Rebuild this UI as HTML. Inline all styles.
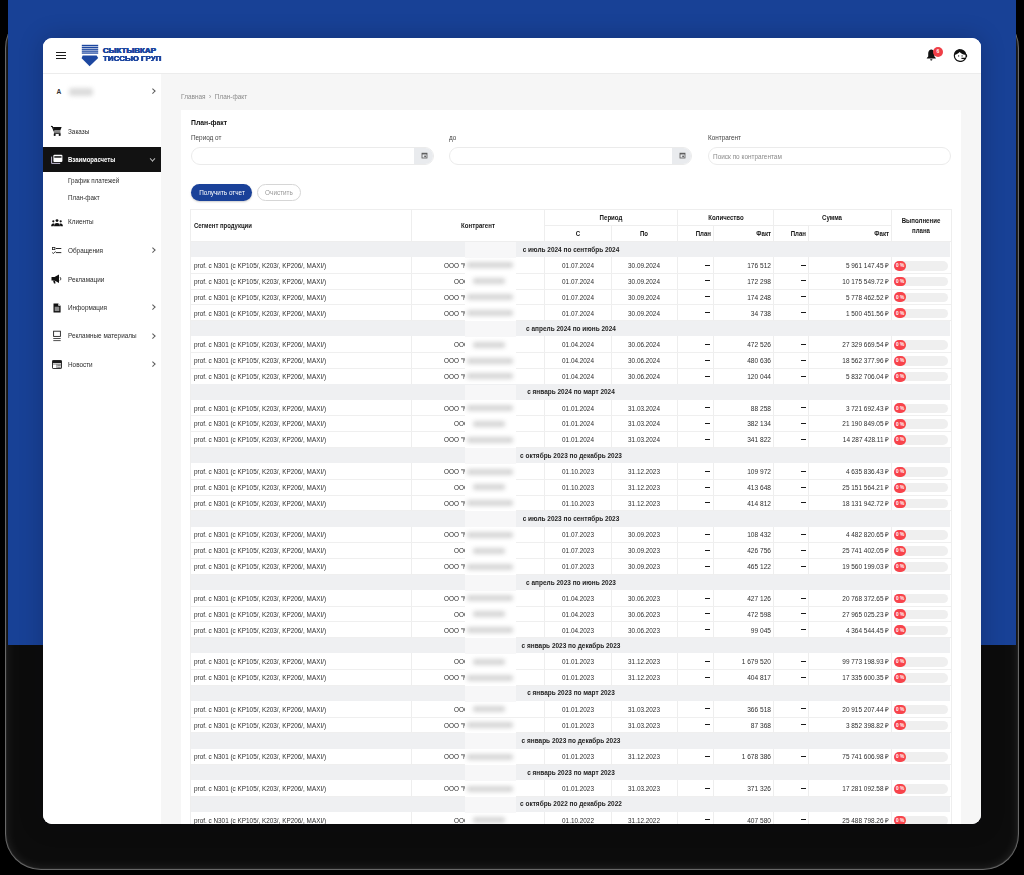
<!DOCTYPE html>
<html><head><meta charset="utf-8"><style>
*{margin:0;padding:0;box-sizing:border-box}
html,body{width:1024px;height:875px;overflow:hidden;background:#000;font-family:"Liberation Sans",sans-serif;color:#333}
.a{position:absolute}
#blue{left:8px;top:0;width:1008px;height:645px;background:#184196}
#shd{left:5px;top:12px;width:1014px;height:858px;border-radius:36px;background:#0c0c0c;box-shadow:inset 0 0 1px 1px rgba(255,255,255,.38),inset 0 0 12px rgba(255,255,255,.13)}
#win{left:43px;top:38px;width:938px;height:786px;border-radius:9px;overflow:hidden;background:#fff;box-shadow:0 0 24px rgba(0,0,20,.22)}
#pg{left:-43px;top:-38px;width:1024px;height:875px}
.t{position:absolute;white-space:nowrap;line-height:1}
.chev{position:absolute;width:3.6px;height:3.6px;border-right:0.9px solid #555;border-top:0.9px solid #555}
.inp{position:absolute;height:17.6px;border:1px solid #ebebeb;border-radius:9px;background:#fff;overflow:hidden}
.cal{position:absolute;right:0;top:0;width:19px;height:100%;background:#e9ebee}
</style></head><body>
<div class="a" id="shd"></div>
<div class="a" id="blue"></div>
<div class="a" id="win"><div class="a" id="pg">
<div class="a" style="left:43.00px;top:38.00px;width:938.00px;height:35.00px;background:#fff;"></div>
<div class="a" style="left:43.00px;top:73.00px;width:938.00px;height:1.00px;background:#ececec;"></div>
<div class="a" style="left:43.00px;top:74.00px;width:118.00px;height:756.00px;background:#fff;"></div>
<div class="a" style="left:161.00px;top:74.00px;width:820.00px;height:756.00px;background:#f6f6f6;"></div>
<div class="a" style="left:55.80px;top:51.50px;width:10.00px;height:1.50px;background:#1a1a1a;"></div>
<div class="a" style="left:55.80px;top:54.50px;width:10.00px;height:1.50px;background:#1a1a1a;"></div>
<div class="a" style="left:55.80px;top:57.50px;width:10.00px;height:1.50px;background:#1a1a1a;"></div>
<svg class="a" style="left:81px;top:44px" width="18" height="23" viewBox="0 0 18 23">
<g fill="#1d47a0">
<rect x="0.8" y="0.8" width="16.4" height="1.3"/><rect x="0.8" y="2.7" width="16.4" height="1.3"/>
<rect x="0.8" y="4.6" width="16.4" height="1.3"/><rect x="0.8" y="6.5" width="16.4" height="1.3"/>
<rect x="0.8" y="8.4" width="16.4" height="1.3"/>
<path d="M1.6 11.4 H15.6 L17.2 14 L8.6 22.2 L0.6 14.2 Z"/>
</g></svg>
<div class="t" style="left:102.80px;top:47.36px;transform-origin:0 50%;font-size:8.0px;font-weight:bold;color:#1d46a0;transform:scaleX(1.0);text-shadow:0.35px 0 0 #1d46a0,-0.3px 0 0 #1d46a0,0 0.3px 0 #1d46a0;">СЫКТЫВКАР</div>
<div class="t" style="left:102.80px;top:54.56px;transform-origin:0 50%;font-size:8.0px;font-weight:bold;color:#1d46a0;transform:scaleX(0.99);text-shadow:0.35px 0 0 #1d46a0,-0.3px 0 0 #1d46a0,0 0.3px 0 #1d46a0;">ТИССЬЮ ГРУП</div>
<svg class="a" style="left:926px;top:48.4px" width="12" height="13" viewBox="0 0 12 13">
<path d="M5 1.5 C3 2 2.2 3.8 2.2 5.8 V8.5 L0.8 10 V10.6 H9.8 V10 L8.4 8.5 V5.8 C8.4 3.8 7.6 2 5.6 1.5 Z" fill="#111"/>
<path d="M4.2 11.2 H6.4 C6.4 12 5.9 12.5 5.3 12.5 C4.7 12.5 4.2 12 4.2 11.2Z" fill="#111"/></svg>
<div class="a" style="left:932.8px;top:46.9px;width:10px;height:10px;border-radius:5px;background:#ef3e46"></div>
<div class="t" style="left:787.80px;width:300px;text-align:center;top:49.29px;transform-origin:50% 50%;font-size:5.0px;font-weight:bold;color:#fff;transform:scaleX(1);">6</div>
<svg class="a" style="left:953px;top:48px" width="15" height="14" viewBox="0 0 15 14">
<path d="M7.35 1.5 A5.95 5.95 0 1 0 12.9 9.6" fill="none" stroke="#111" stroke-width="1.25"/>
<path d="M1.4 7 C1.6 3.7 4.2 1.2 7.35 1.2 C10.7 1.2 13.3 3.8 13.4 7 C11.2 6.9 8.4 6 6.6 4.1 C5.4 5.6 3.6 6.6 1.4 7Z" fill="#111"/>
<rect x="12.5" y="6.2" width="1.6" height="3.2" rx="0.7" fill="#111"/>
<path d="M8.4 10.3 H13" stroke="#111" stroke-width="1.15"/>
<rect x="5" y="7.3" width="1.2" height="1.3" fill="#444"/><rect x="8.5" y="7.3" width="1.2" height="1.3" fill="#444"/></svg>
<div class="t" style="left:56.40px;top:88.62px;transform-origin:0 50%;font-size:6.6px;font-weight:bold;color:#333;transform:scaleX(1);">A</div>
<div class="a" style="left:69px;top:87.5px;width:24px;height:8px;background:#dcdcdc;filter:blur(2px);border-radius:3px"></div>
<div class="chev" style="left:150.6px;top:88.9px;border-color:#5a5a5a;transform:rotate(45deg)"></div>
<svg class="a" style="left:50px;top:125px" width="13" height="12" viewBox="0 0 13 12">
<path d="M1 1.3 L2.4 1.8 L4.2 6.4" fill="none" stroke="#111" stroke-width="1.2"/>
<path d="M2.9 1.9 H11.6 L10.3 5.6 H4.1 Z" fill="#111"/>
<rect x="3.9" y="5.6" width="6.5" height="2.5" fill="#8a8a8a"/>
<path d="M3.9 8.4 H10.6" stroke="#111" stroke-width="0.9"/>
<circle cx="4.7" cy="9.9" r="1.05" fill="#111"/><circle cx="9.7" cy="9.9" r="1.05" fill="#111"/></svg>
<div class="t" style="left:68.20px;top:127.50px;transform-origin:0 50%;font-size:7.0px;color:#2a2a2a;transform:scaleX(0.91);">Заказы</div>
<div class="a" style="left:43.00px;top:146.80px;width:118.00px;height:25.40px;background:#121212;"></div>
<svg class="a" style="left:50px;top:153px" width="14" height="12" viewBox="0 0 14 12">
<path d="M1.6 3.6 V10.4 H10.2" fill="none" stroke="#d8d0ea" stroke-width="0.9"/>
<rect x="3.4" y="1.8" width="9" height="7.2" rx="1" fill="#fff"/>
<rect x="4.3" y="3.1" width="7.2" height="1.7" fill="#333"/></svg>
<div class="t" style="left:68.00px;top:155.70px;transform-origin:0 50%;font-size:7.0px;font-weight:bold;color:#fff;transform:scaleX(0.86);">Взаиморасчеты</div>
<div class="chev" style="left:150.8px;top:156.8px;border-color:#b8b8b8;transform:rotate(135deg)"></div>
<div class="t" style="left:68.20px;top:177.20px;transform-origin:0 50%;font-size:7.0px;color:#2e2e2e;transform:scaleX(0.9);">График платежей</div>
<div class="t" style="left:68.20px;top:194.30px;transform-origin:0 50%;font-size:7.0px;color:#2e2e2e;transform:scaleX(0.9);">План-факт</div>
<svg class="a" style="left:51px;top:219px" width="12" height="8" viewBox="0 0 12 8">
<circle cx="6" cy="1.6" r="1.45" fill="#111"/><circle cx="2.3" cy="2.3" r="1.1" fill="#111"/><circle cx="9.7" cy="2.3" r="1.1" fill="#111"/>
<path d="M3 7.3 C3 5.2 4.2 4 6 4 C7.8 4 9 5.2 9 7.3Z" fill="#111"/>
<path d="M0.1 7.3 C0.1 5.6 0.9 4.4 2.2 4.4 C2.8 4.4 3.2 4.6 3.4 4.8 L2.6 7.3Z" fill="#111"/>
<path d="M11.9 7.3 C11.9 5.6 11.1 4.4 9.8 4.4 C9.2 4.4 8.8 4.6 8.6 4.8 L9.4 7.3Z" fill="#111"/></svg>
<div class="t" style="left:68.20px;top:218.40px;transform-origin:0 50%;font-size:7.0px;color:#2a2a2a;transform:scaleX(0.91);">Клиенты</div>
<svg class="a" style="left:52px;top:247px" width="10" height="8" viewBox="0 0 10 8">
<rect x="0.5" y="0.4" width="2.4" height="2.2" fill="none" stroke="#222" stroke-width="0.8"/>
<path d="M3.8 1.5 H9.3 M3.8 5.6 H9.3" stroke="#111" stroke-width="0.9"/>
<path d="M0.2 5.3 L1.3 6.6 L3.5 4.4" fill="none" stroke="#111" stroke-width="0.8"/></svg>
<div class="t" style="left:68.20px;top:246.60px;transform-origin:0 50%;font-size:7.0px;color:#2a2a2a;transform:scaleX(0.91);">Обращения</div>
<div class="chev" style="left:150.6px;top:248.20000000000002px;border-color:#5a5a5a;transform:rotate(45deg)"></div>
<svg class="a" style="left:51px;top:274px" width="11" height="10" viewBox="0 0 11 10">
<path d="M0.5 3 H3.5 L8 0.5 V9 L3.5 6.5 H0.5 Z" fill="#111"/><path d="M2 6.5 L3 9.5 H4.5 L4 6.5Z" fill="#111"/>
<path d="M9 3.2 C10 4 10 5.6 9 6.4" stroke="#111" stroke-width="0.9" fill="none"/></svg>
<div class="t" style="left:68.20px;top:275.50px;transform-origin:0 50%;font-size:7.0px;color:#2a2a2a;transform:scaleX(0.91);">Рекламации</div>
<svg class="a" style="left:53px;top:303px" width="8" height="10" viewBox="0 0 8 10">
<path d="M0.5 0.5 H5.3 L7.6 2.8 V9.4 H0.5 Z" fill="#111"/>
<path d="M5.3 0.5 V2.8 H7.6Z" fill="#fff"/>
<rect x="1.7" y="3.7" width="4.6" height="4.4" fill="#8a8a8a"/></svg>
<div class="t" style="left:68.20px;top:303.70px;transform-origin:0 50%;font-size:7.0px;color:#2a2a2a;transform:scaleX(0.91);">Информация</div>
<div class="chev" style="left:150.6px;top:305.2px;border-color:#5a5a5a;transform:rotate(45deg)"></div>
<svg class="a" style="left:53px;top:330px" width="8" height="12" viewBox="0 0 8 12">
<rect x="0.6" y="1.2" width="6.8" height="5.2" fill="none" stroke="#222" stroke-width="0.9"/>
<path d="M0.3 8.5 H7.7 M0.3 10.6 H7.7" stroke="#222" stroke-width="0.8"/></svg>
<div class="t" style="left:68.20px;top:332.10px;transform-origin:0 50%;font-size:7.0px;color:#2a2a2a;transform:scaleX(0.91);">Рекламные материалы</div>
<div class="chev" style="left:150.6px;top:333.59999999999997px;border-color:#5a5a5a;transform:rotate(45deg)"></div>
<svg class="a" style="left:52px;top:360px" width="10" height="9" viewBox="0 0 10 9">
<rect x="0.5" y="0.5" width="9" height="8" rx="0.6" fill="none" stroke="#1a1a1a" stroke-width="0.9"/>
<rect x="0.5" y="0.5" width="9" height="2.6" fill="#1a1a1a"/>
<rect x="1.3" y="4.8" width="3" height="3" fill="#fff"/>
<path d="M5.4 5.2 H8.8 M5.4 7.2 H8.8" stroke="#333" stroke-width="0.8"/>
<path d="M1 4.2 H9 M4.8 4.2 V8.2" stroke="#333" stroke-width="0.5"/></svg>
<div class="t" style="left:68.20px;top:360.50px;transform-origin:0 50%;font-size:7.0px;color:#2a2a2a;transform:scaleX(0.91);">Новости</div>
<div class="chev" style="left:150.6px;top:362.0px;border-color:#5a5a5a;transform:rotate(45deg)"></div>
<div class="t" style="left:180.50px;top:93.00px;transform-origin:0 50%;font-size:7.0px;color:#8a8a8a;transform:scaleX(0.92);">Главная &nbsp;›&nbsp; План-факт</div>
<div class="a" style="left:180.50px;top:110.00px;width:780.50px;height:720.00px;background:#fff;"></div>
<div class="t" style="left:190.80px;top:118.69px;transform-origin:0 50%;font-size:7.2px;font-weight:bold;color:#111;transform:scaleX(0.95);">План-факт</div>
<div class="t" style="left:190.80px;top:134.00px;transform-origin:0 50%;font-size:7.0px;color:#444;transform:scaleX(0.91);">Период от</div>
<div class="t" style="left:448.60px;top:134.00px;transform-origin:0 50%;font-size:7.0px;color:#444;transform:scaleX(0.91);">до</div>
<div class="t" style="left:707.90px;top:134.00px;transform-origin:0 50%;font-size:7.0px;color:#444;transform:scaleX(0.91);">Контрагент</div>
<div class="inp" style="left:190.8px;top:147.4px;width:243.2px"><div class="cal"></div></div>
<div class="inp" style="left:448.6px;top:147.4px;width:243.4px"><div class="cal"></div></div>
<div class="inp" style="left:707.9px;top:147.4px;width:243.1px"></div>
<div class="t" style="left:713.30px;top:152.50px;transform-origin:0 50%;font-size:7.0px;color:#8a8a8a;transform:scaleX(0.92);">Поиск по контрагентам</div>
<svg class="a" style="left:421.2px;top:151.9px" width="7" height="7" viewBox="0 0 7 7"><rect x="1" y="1.2" width="5" height="4.8" fill="none" stroke="#555" stroke-width="0.8"/><rect x="1" y="1.2" width="5" height="1.2" fill="#555"/><rect x="3.3" y="3.6" width="1.6" height="1.5" fill="#555"/></svg>
<svg class="a" style="left:679.2px;top:151.9px" width="7" height="7" viewBox="0 0 7 7"><rect x="1" y="1.2" width="5" height="4.8" fill="none" stroke="#555" stroke-width="0.8"/><rect x="1" y="1.2" width="5" height="1.2" fill="#555"/><rect x="3.3" y="3.6" width="1.6" height="1.5" fill="#555"/></svg>
<div class="a" style="left:190.8px;top:184.1px;width:61.5px;height:17px;border-radius:8.5px;background:#1a4199;box-shadow:0 1px 2px rgba(0,0,0,.2)"></div>
<div class="t" style="left:71.60px;width:300px;text-align:center;top:188.80px;transform-origin:50% 50%;font-size:7.0px;color:#fff;transform:scaleX(0.91);">Получить отчет</div>
<div class="a" style="left:256.7px;top:184.1px;width:43.9px;height:17px;border-radius:8.5px;border:1px solid #d6d6d6;background:#fff"></div>
<div class="t" style="left:128.60px;width:300px;text-align:center;top:188.80px;transform-origin:50% 50%;font-size:7.0px;color:#999;transform:scaleX(0.91);">Очистить</div>
<div class="a" style="left:190.80px;top:208.90px;width:760.20px;height:621.10px;background:#fff;"></div>
<div class="a" style="left:190.30px;top:208.90px;width:1.00px;height:621.10px;background:#eeeeee;"></div>
<div class="a" style="left:950.50px;top:208.90px;width:1.00px;height:621.10px;background:#eeeeee;"></div>
<div class="a" style="left:190.80px;top:208.90px;width:760.20px;height:1.00px;background:#eeeeee;"></div>
<div class="a" style="left:544.80px;top:225.10px;width:346.70px;height:1.00px;background:#eeeeee;"></div>
<div class="a" style="left:190.80px;top:240.90px;width:760.20px;height:1.00px;background:#eeeeee;"></div>
<div class="a" style="left:410.90px;top:208.90px;width:1.00px;height:32.50px;background:#eeeeee;"></div>
<div class="a" style="left:544.30px;top:208.90px;width:1.00px;height:32.50px;background:#eeeeee;"></div>
<div class="a" style="left:610.50px;top:225.60px;width:1.00px;height:15.80px;background:#eeeeee;"></div>
<div class="a" style="left:677.10px;top:208.90px;width:1.00px;height:32.50px;background:#eeeeee;"></div>
<div class="a" style="left:712.50px;top:225.60px;width:1.00px;height:15.80px;background:#eeeeee;"></div>
<div class="a" style="left:772.90px;top:208.90px;width:1.00px;height:32.50px;background:#eeeeee;"></div>
<div class="a" style="left:808.30px;top:225.60px;width:1.00px;height:15.80px;background:#eeeeee;"></div>
<div class="a" style="left:891.00px;top:208.90px;width:1.00px;height:32.50px;background:#eeeeee;"></div>
<div class="a" style="left:410.90px;top:241.40px;width:1.00px;height:588.60px;background:#eeeeee;"></div>
<div class="a" style="left:544.30px;top:241.40px;width:1.00px;height:588.60px;background:#eeeeee;"></div>
<div class="a" style="left:610.50px;top:241.40px;width:1.00px;height:588.60px;background:#eeeeee;"></div>
<div class="a" style="left:677.10px;top:241.40px;width:1.00px;height:588.60px;background:#eeeeee;"></div>
<div class="a" style="left:712.50px;top:241.40px;width:1.00px;height:588.60px;background:#eeeeee;"></div>
<div class="a" style="left:772.90px;top:241.40px;width:1.00px;height:588.60px;background:#eeeeee;"></div>
<div class="a" style="left:808.30px;top:241.40px;width:1.00px;height:588.60px;background:#eeeeee;"></div>
<div class="a" style="left:891.00px;top:241.40px;width:1.00px;height:588.60px;background:#eeeeee;"></div>
<div class="t" style="left:193.80px;top:221.80px;transform-origin:0 50%;font-size:7.0px;font-weight:bold;color:#161616;transform:scaleX(0.85);">Сегмент продукции</div>
<div class="t" style="left:328.10px;width:300px;text-align:center;top:221.80px;transform-origin:50% 50%;font-size:7.0px;font-weight:bold;color:#161616;transform:scaleX(0.87);">Контрагент</div>
<div class="t" style="left:461.20px;width:300px;text-align:center;top:213.70px;transform-origin:50% 50%;font-size:7.0px;font-weight:bold;color:#161616;transform:scaleX(0.87);">Период</div>
<div class="t" style="left:427.90px;width:300px;text-align:center;top:229.60px;transform-origin:50% 50%;font-size:7.0px;font-weight:bold;color:#161616;transform:scaleX(0.87);">С</div>
<div class="t" style="left:494.30px;width:300px;text-align:center;top:229.60px;transform-origin:50% 50%;font-size:7.0px;font-weight:bold;color:#161616;transform:scaleX(0.87);">По</div>
<div class="t" style="left:575.50px;width:300px;text-align:center;top:213.70px;transform-origin:50% 50%;font-size:7.0px;font-weight:bold;color:#161616;transform:scaleX(0.87);">Количество</div>
<div class="t" style="left:410.50px;width:300px;text-align:right;top:229.60px;transform-origin:100% 50%;font-size:7.0px;font-weight:bold;color:#161616;transform:scaleX(0.87);">План</div>
<div class="t" style="left:471.00px;width:300px;text-align:right;top:229.60px;transform-origin:100% 50%;font-size:7.0px;font-weight:bold;color:#161616;transform:scaleX(0.87);">Факт</div>
<div class="t" style="left:682.45px;width:300px;text-align:center;top:213.70px;transform-origin:50% 50%;font-size:7.0px;font-weight:bold;color:#161616;transform:scaleX(0.87);">Сумма</div>
<div class="t" style="left:506.30px;width:300px;text-align:right;top:229.60px;transform-origin:100% 50%;font-size:7.0px;font-weight:bold;color:#161616;transform:scaleX(0.87);">План</div>
<div class="t" style="left:589.10px;width:300px;text-align:right;top:229.60px;transform-origin:100% 50%;font-size:7.0px;font-weight:bold;color:#161616;transform:scaleX(0.87);">Факт</div>
<div class="t" style="left:771.25px;width:300px;text-align:center;top:216.60px;transform-origin:50% 50%;font-size:7.0px;font-weight:bold;color:#161616;transform:scaleX(0.87);">Выполнение</div>
<div class="t" style="left:771.25px;width:300px;text-align:center;top:226.80px;transform-origin:50% 50%;font-size:7.0px;font-weight:bold;color:#161616;transform:scaleX(0.87);">плана</div>
<div class="a" style="left:191.30px;top:241.80px;width:759.20px;height:15.45px;background:#eff0f2;"></div>
<div class="a" style="left:464.60px;top:242.00px;width:51.40px;height:15.85px;background:#f7f7f8;"></div>
<div class="t" style="left:420.90px;width:300px;text-align:center;top:245.69px;transform-origin:50% 50%;font-size:7.2px;font-weight:bold;color:#222;transform:scaleX(0.9);">с июль 2024 по сентябрь 2024</div>
<div class="a" style="left:190.80px;top:272.70px;width:760.20px;height:1.00px;background:#efefef;"></div>
<div class="t" style="left:193.80px;top:261.95px;transform-origin:0 50%;font-size:7.0px;color:#2c2c2c;transform:scaleX(0.91);">prof. c N301 (c KP105/, K203/, KP206/, MAXI/)</div>
<div class="t" style="left:444.40px;top:261.95px;transform-origin:0 50%;font-size:7.0px;color:#2c2c2c;transform:scaleX(0.91);">ООО "М</div>
<div class="a" style="left:464.60px;top:257.85px;width:51.40px;height:15.85px;background:#fff;"></div>
<div class="a" style="left:466.6px;top:262.45px;width:46px;height:6px;background:#d6d6d6;filter:blur(2px);border-radius:2px"></div>
<div class="t" style="left:427.90px;width:300px;text-align:center;top:261.95px;transform-origin:50% 50%;font-size:7.0px;color:#2c2c2c;transform:scaleX(0.91);">01.07.2024</div>
<div class="t" style="left:494.30px;width:300px;text-align:center;top:261.95px;transform-origin:50% 50%;font-size:7.0px;color:#2c2c2c;transform:scaleX(0.91);">30.09.2024</div>
<div class="a" style="left:705.00px;top:265.00px;width:5.00px;height:1.10px;background:#1a1a1a;"></div>
<div class="t" style="left:471.00px;width:300px;text-align:right;top:261.95px;transform-origin:100% 50%;font-size:7.0px;color:#2c2c2c;transform:scaleX(0.94);">176 512</div>
<div class="a" style="left:800.80px;top:265.00px;width:5.00px;height:1.10px;background:#1a1a1a;"></div>
<div class="t" style="left:589.00px;width:300px;text-align:right;top:261.95px;transform-origin:100% 50%;font-size:7.0px;color:#2c2c2c;transform:scaleX(0.92);">5 961 147.45 ₽</div>
<div class="a" style="left:893.90px;top:260.95px;width:54.6px;height:9.6px;border-radius:5px;background:#efefef"></div>
<div class="a" style="left:893.90px;top:260.75px;width:12.6px;height:9.9px;border-radius:5px;background:#f8434b"></div>
<div class="t" style="left:750.20px;width:300px;text-align:center;top:264.04px;transform-origin:50% 50%;font-size:4.8px;color:#fff;transform:scaleX(1);font-weight:bold;">0 %</div>
<div class="a" style="left:190.80px;top:288.55px;width:760.20px;height:1.00px;background:#efefef;"></div>
<div class="t" style="left:193.80px;top:277.80px;transform-origin:0 50%;font-size:7.0px;color:#2c2c2c;transform:scaleX(0.91);">prof. c N301 (c KP105/, K203/, KP206/, MAXI/)</div>
<div class="t" style="left:454.40px;top:277.80px;transform-origin:0 50%;font-size:7.0px;color:#2c2c2c;transform:scaleX(0.91);">ООО</div>
<div class="a" style="left:464.60px;top:273.70px;width:51.40px;height:15.85px;background:#fff;"></div>
<div class="a" style="left:472.6px;top:278.30px;width:32px;height:6px;background:#d6d6d6;filter:blur(2px);border-radius:2px"></div>
<div class="t" style="left:427.90px;width:300px;text-align:center;top:277.80px;transform-origin:50% 50%;font-size:7.0px;color:#2c2c2c;transform:scaleX(0.91);">01.07.2024</div>
<div class="t" style="left:494.30px;width:300px;text-align:center;top:277.80px;transform-origin:50% 50%;font-size:7.0px;color:#2c2c2c;transform:scaleX(0.91);">30.09.2024</div>
<div class="a" style="left:705.00px;top:280.00px;width:5.00px;height:1.10px;background:#1a1a1a;"></div>
<div class="t" style="left:471.00px;width:300px;text-align:right;top:277.80px;transform-origin:100% 50%;font-size:7.0px;color:#2c2c2c;transform:scaleX(0.94);">172 298</div>
<div class="a" style="left:800.80px;top:280.00px;width:5.00px;height:1.10px;background:#1a1a1a;"></div>
<div class="t" style="left:589.00px;width:300px;text-align:right;top:277.80px;transform-origin:100% 50%;font-size:7.0px;color:#2c2c2c;transform:scaleX(0.92);">10 175 549.72 ₽</div>
<div class="a" style="left:893.90px;top:276.80px;width:54.6px;height:9.6px;border-radius:5px;background:#efefef"></div>
<div class="a" style="left:893.90px;top:276.60px;width:12.6px;height:9.9px;border-radius:5px;background:#f8434b"></div>
<div class="t" style="left:750.20px;width:300px;text-align:center;top:279.89px;transform-origin:50% 50%;font-size:4.8px;color:#fff;transform:scaleX(1);font-weight:bold;">0 %</div>
<div class="a" style="left:190.80px;top:304.40px;width:760.20px;height:1.00px;background:#efefef;"></div>
<div class="t" style="left:193.80px;top:293.65px;transform-origin:0 50%;font-size:7.0px;color:#2c2c2c;transform:scaleX(0.91);">prof. c N301 (c KP105/, K203/, KP206/, MAXI/)</div>
<div class="t" style="left:444.40px;top:293.65px;transform-origin:0 50%;font-size:7.0px;color:#2c2c2c;transform:scaleX(0.91);">ООО "М</div>
<div class="a" style="left:464.60px;top:289.55px;width:51.40px;height:15.85px;background:#fff;"></div>
<div class="a" style="left:466.6px;top:294.15px;width:46px;height:6px;background:#d6d6d6;filter:blur(2px);border-radius:2px"></div>
<div class="t" style="left:427.90px;width:300px;text-align:center;top:293.65px;transform-origin:50% 50%;font-size:7.0px;color:#2c2c2c;transform:scaleX(0.91);">01.07.2024</div>
<div class="t" style="left:494.30px;width:300px;text-align:center;top:293.65px;transform-origin:50% 50%;font-size:7.0px;color:#2c2c2c;transform:scaleX(0.91);">30.09.2024</div>
<div class="a" style="left:705.00px;top:296.00px;width:5.00px;height:1.10px;background:#1a1a1a;"></div>
<div class="t" style="left:471.00px;width:300px;text-align:right;top:293.65px;transform-origin:100% 50%;font-size:7.0px;color:#2c2c2c;transform:scaleX(0.94);">174 248</div>
<div class="a" style="left:800.80px;top:296.00px;width:5.00px;height:1.10px;background:#1a1a1a;"></div>
<div class="t" style="left:589.00px;width:300px;text-align:right;top:293.65px;transform-origin:100% 50%;font-size:7.0px;color:#2c2c2c;transform:scaleX(0.92);">5 778 462.52 ₽</div>
<div class="a" style="left:893.90px;top:292.65px;width:54.6px;height:9.6px;border-radius:5px;background:#efefef"></div>
<div class="a" style="left:893.90px;top:292.45px;width:12.6px;height:9.9px;border-radius:5px;background:#f8434b"></div>
<div class="t" style="left:750.20px;width:300px;text-align:center;top:295.74px;transform-origin:50% 50%;font-size:4.8px;color:#fff;transform:scaleX(1);font-weight:bold;">0 %</div>
<div class="a" style="left:190.80px;top:320.25px;width:760.20px;height:1.00px;background:#efefef;"></div>
<div class="t" style="left:193.80px;top:309.50px;transform-origin:0 50%;font-size:7.0px;color:#2c2c2c;transform:scaleX(0.91);">prof. c N301 (c KP105/, K203/, KP206/, MAXI/)</div>
<div class="t" style="left:444.40px;top:309.50px;transform-origin:0 50%;font-size:7.0px;color:#2c2c2c;transform:scaleX(0.91);">ООО "М</div>
<div class="a" style="left:464.60px;top:305.40px;width:51.40px;height:15.85px;background:#fff;"></div>
<div class="a" style="left:466.6px;top:310.00px;width:46px;height:6px;background:#d6d6d6;filter:blur(2px);border-radius:2px"></div>
<div class="t" style="left:427.90px;width:300px;text-align:center;top:309.50px;transform-origin:50% 50%;font-size:7.0px;color:#2c2c2c;transform:scaleX(0.91);">01.07.2024</div>
<div class="t" style="left:494.30px;width:300px;text-align:center;top:309.50px;transform-origin:50% 50%;font-size:7.0px;color:#2c2c2c;transform:scaleX(0.91);">30.09.2024</div>
<div class="a" style="left:705.00px;top:312.00px;width:5.00px;height:1.10px;background:#1a1a1a;"></div>
<div class="t" style="left:471.00px;width:300px;text-align:right;top:309.50px;transform-origin:100% 50%;font-size:7.0px;color:#2c2c2c;transform:scaleX(0.94);">34 738</div>
<div class="a" style="left:800.80px;top:312.00px;width:5.00px;height:1.10px;background:#1a1a1a;"></div>
<div class="t" style="left:589.00px;width:300px;text-align:right;top:309.50px;transform-origin:100% 50%;font-size:7.0px;color:#2c2c2c;transform:scaleX(0.92);">1 500 451.56 ₽</div>
<div class="a" style="left:893.90px;top:308.50px;width:54.6px;height:9.6px;border-radius:5px;background:#efefef"></div>
<div class="a" style="left:893.90px;top:308.30px;width:12.6px;height:9.9px;border-radius:5px;background:#f8434b"></div>
<div class="t" style="left:750.20px;width:300px;text-align:center;top:311.59px;transform-origin:50% 50%;font-size:4.8px;color:#fff;transform:scaleX(1);font-weight:bold;">0 %</div>
<div class="a" style="left:191.30px;top:321.05px;width:759.20px;height:15.45px;background:#eff0f2;"></div>
<div class="a" style="left:464.60px;top:321.25px;width:51.40px;height:15.85px;background:#f7f7f8;"></div>
<div class="t" style="left:420.90px;width:300px;text-align:center;top:324.94px;transform-origin:50% 50%;font-size:7.2px;font-weight:bold;color:#222;transform:scaleX(0.9);">с апрель 2024 по июнь 2024</div>
<div class="a" style="left:190.80px;top:351.95px;width:760.20px;height:1.00px;background:#efefef;"></div>
<div class="t" style="left:193.80px;top:341.20px;transform-origin:0 50%;font-size:7.0px;color:#2c2c2c;transform:scaleX(0.91);">prof. c N301 (c KP105/, K203/, KP206/, MAXI/)</div>
<div class="t" style="left:454.40px;top:341.20px;transform-origin:0 50%;font-size:7.0px;color:#2c2c2c;transform:scaleX(0.91);">ООО</div>
<div class="a" style="left:464.60px;top:337.10px;width:51.40px;height:15.85px;background:#fff;"></div>
<div class="a" style="left:472.6px;top:341.70px;width:32px;height:6px;background:#d6d6d6;filter:blur(2px);border-radius:2px"></div>
<div class="t" style="left:427.90px;width:300px;text-align:center;top:341.20px;transform-origin:50% 50%;font-size:7.0px;color:#2c2c2c;transform:scaleX(0.91);">01.04.2024</div>
<div class="t" style="left:494.30px;width:300px;text-align:center;top:341.20px;transform-origin:50% 50%;font-size:7.0px;color:#2c2c2c;transform:scaleX(0.91);">30.06.2024</div>
<div class="a" style="left:705.00px;top:344.00px;width:5.00px;height:1.10px;background:#1a1a1a;"></div>
<div class="t" style="left:471.00px;width:300px;text-align:right;top:341.20px;transform-origin:100% 50%;font-size:7.0px;color:#2c2c2c;transform:scaleX(0.94);">472 526</div>
<div class="a" style="left:800.80px;top:344.00px;width:5.00px;height:1.10px;background:#1a1a1a;"></div>
<div class="t" style="left:589.00px;width:300px;text-align:right;top:341.20px;transform-origin:100% 50%;font-size:7.0px;color:#2c2c2c;transform:scaleX(0.92);">27 329 669.54 ₽</div>
<div class="a" style="left:893.90px;top:340.20px;width:54.6px;height:9.6px;border-radius:5px;background:#efefef"></div>
<div class="a" style="left:893.90px;top:340.00px;width:12.6px;height:9.9px;border-radius:5px;background:#f8434b"></div>
<div class="t" style="left:750.20px;width:300px;text-align:center;top:343.29px;transform-origin:50% 50%;font-size:4.8px;color:#fff;transform:scaleX(1);font-weight:bold;">0 %</div>
<div class="a" style="left:190.80px;top:367.80px;width:760.20px;height:1.00px;background:#efefef;"></div>
<div class="t" style="left:193.80px;top:357.05px;transform-origin:0 50%;font-size:7.0px;color:#2c2c2c;transform:scaleX(0.91);">prof. c N301 (c KP105/, K203/, KP206/, MAXI/)</div>
<div class="t" style="left:444.40px;top:357.05px;transform-origin:0 50%;font-size:7.0px;color:#2c2c2c;transform:scaleX(0.91);">ООО "М</div>
<div class="a" style="left:464.60px;top:352.95px;width:51.40px;height:15.85px;background:#fff;"></div>
<div class="a" style="left:466.6px;top:357.55px;width:46px;height:6px;background:#d6d6d6;filter:blur(2px);border-radius:2px"></div>
<div class="t" style="left:427.90px;width:300px;text-align:center;top:357.05px;transform-origin:50% 50%;font-size:7.0px;color:#2c2c2c;transform:scaleX(0.91);">01.04.2024</div>
<div class="t" style="left:494.30px;width:300px;text-align:center;top:357.05px;transform-origin:50% 50%;font-size:7.0px;color:#2c2c2c;transform:scaleX(0.91);">30.06.2024</div>
<div class="a" style="left:705.00px;top:360.00px;width:5.00px;height:1.10px;background:#1a1a1a;"></div>
<div class="t" style="left:471.00px;width:300px;text-align:right;top:357.05px;transform-origin:100% 50%;font-size:7.0px;color:#2c2c2c;transform:scaleX(0.94);">480 636</div>
<div class="a" style="left:800.80px;top:360.00px;width:5.00px;height:1.10px;background:#1a1a1a;"></div>
<div class="t" style="left:589.00px;width:300px;text-align:right;top:357.05px;transform-origin:100% 50%;font-size:7.0px;color:#2c2c2c;transform:scaleX(0.92);">18 562 377.96 ₽</div>
<div class="a" style="left:893.90px;top:356.05px;width:54.6px;height:9.6px;border-radius:5px;background:#efefef"></div>
<div class="a" style="left:893.90px;top:355.85px;width:12.6px;height:9.9px;border-radius:5px;background:#f8434b"></div>
<div class="t" style="left:750.20px;width:300px;text-align:center;top:359.14px;transform-origin:50% 50%;font-size:4.8px;color:#fff;transform:scaleX(1);font-weight:bold;">0 %</div>
<div class="a" style="left:190.80px;top:383.65px;width:760.20px;height:1.00px;background:#efefef;"></div>
<div class="t" style="left:193.80px;top:372.90px;transform-origin:0 50%;font-size:7.0px;color:#2c2c2c;transform:scaleX(0.91);">prof. c N301 (c KP105/, K203/, KP206/, MAXI/)</div>
<div class="t" style="left:444.40px;top:372.90px;transform-origin:0 50%;font-size:7.0px;color:#2c2c2c;transform:scaleX(0.91);">ООО "М</div>
<div class="a" style="left:464.60px;top:368.80px;width:51.40px;height:15.85px;background:#fff;"></div>
<div class="a" style="left:466.6px;top:373.40px;width:46px;height:6px;background:#d6d6d6;filter:blur(2px);border-radius:2px"></div>
<div class="t" style="left:427.90px;width:300px;text-align:center;top:372.90px;transform-origin:50% 50%;font-size:7.0px;color:#2c2c2c;transform:scaleX(0.91);">01.04.2024</div>
<div class="t" style="left:494.30px;width:300px;text-align:center;top:372.90px;transform-origin:50% 50%;font-size:7.0px;color:#2c2c2c;transform:scaleX(0.91);">30.06.2024</div>
<div class="a" style="left:705.00px;top:376.00px;width:5.00px;height:1.10px;background:#1a1a1a;"></div>
<div class="t" style="left:471.00px;width:300px;text-align:right;top:372.90px;transform-origin:100% 50%;font-size:7.0px;color:#2c2c2c;transform:scaleX(0.94);">120 044</div>
<div class="a" style="left:800.80px;top:376.00px;width:5.00px;height:1.10px;background:#1a1a1a;"></div>
<div class="t" style="left:589.00px;width:300px;text-align:right;top:372.90px;transform-origin:100% 50%;font-size:7.0px;color:#2c2c2c;transform:scaleX(0.92);">5 832 706.04 ₽</div>
<div class="a" style="left:893.90px;top:371.90px;width:54.6px;height:9.6px;border-radius:5px;background:#efefef"></div>
<div class="a" style="left:893.90px;top:371.70px;width:12.6px;height:9.9px;border-radius:5px;background:#f8434b"></div>
<div class="t" style="left:750.20px;width:300px;text-align:center;top:374.99px;transform-origin:50% 50%;font-size:4.8px;color:#fff;transform:scaleX(1);font-weight:bold;">0 %</div>
<div class="a" style="left:191.30px;top:384.45px;width:759.20px;height:15.45px;background:#eff0f2;"></div>
<div class="a" style="left:464.60px;top:384.65px;width:51.40px;height:15.85px;background:#f7f7f8;"></div>
<div class="t" style="left:420.90px;width:300px;text-align:center;top:388.34px;transform-origin:50% 50%;font-size:7.2px;font-weight:bold;color:#222;transform:scaleX(0.9);">с январь 2024 по март 2024</div>
<div class="a" style="left:190.80px;top:415.35px;width:760.20px;height:1.00px;background:#efefef;"></div>
<div class="t" style="left:193.80px;top:404.60px;transform-origin:0 50%;font-size:7.0px;color:#2c2c2c;transform:scaleX(0.91);">prof. c N301 (c KP105/, K203/, KP206/, MAXI/)</div>
<div class="t" style="left:444.40px;top:404.60px;transform-origin:0 50%;font-size:7.0px;color:#2c2c2c;transform:scaleX(0.91);">ООО "М</div>
<div class="a" style="left:464.60px;top:400.50px;width:51.40px;height:15.85px;background:#fff;"></div>
<div class="a" style="left:466.6px;top:405.10px;width:46px;height:6px;background:#d6d6d6;filter:blur(2px);border-radius:2px"></div>
<div class="t" style="left:427.90px;width:300px;text-align:center;top:404.60px;transform-origin:50% 50%;font-size:7.0px;color:#2c2c2c;transform:scaleX(0.91);">01.01.2024</div>
<div class="t" style="left:494.30px;width:300px;text-align:center;top:404.60px;transform-origin:50% 50%;font-size:7.0px;color:#2c2c2c;transform:scaleX(0.91);">31.03.2024</div>
<div class="a" style="left:705.00px;top:407.00px;width:5.00px;height:1.10px;background:#1a1a1a;"></div>
<div class="t" style="left:471.00px;width:300px;text-align:right;top:404.60px;transform-origin:100% 50%;font-size:7.0px;color:#2c2c2c;transform:scaleX(0.94);">88 258</div>
<div class="a" style="left:800.80px;top:407.00px;width:5.00px;height:1.10px;background:#1a1a1a;"></div>
<div class="t" style="left:589.00px;width:300px;text-align:right;top:404.60px;transform-origin:100% 50%;font-size:7.0px;color:#2c2c2c;transform:scaleX(0.92);">3 721 692.43 ₽</div>
<div class="a" style="left:893.90px;top:403.60px;width:54.6px;height:9.6px;border-radius:5px;background:#efefef"></div>
<div class="a" style="left:893.90px;top:403.40px;width:12.6px;height:9.9px;border-radius:5px;background:#f8434b"></div>
<div class="t" style="left:750.20px;width:300px;text-align:center;top:406.69px;transform-origin:50% 50%;font-size:4.8px;color:#fff;transform:scaleX(1);font-weight:bold;">0 %</div>
<div class="a" style="left:190.80px;top:431.20px;width:760.20px;height:1.00px;background:#efefef;"></div>
<div class="t" style="left:193.80px;top:420.45px;transform-origin:0 50%;font-size:7.0px;color:#2c2c2c;transform:scaleX(0.91);">prof. c N301 (c KP105/, K203/, KP206/, MAXI/)</div>
<div class="t" style="left:454.40px;top:420.45px;transform-origin:0 50%;font-size:7.0px;color:#2c2c2c;transform:scaleX(0.91);">ООО</div>
<div class="a" style="left:464.60px;top:416.35px;width:51.40px;height:15.85px;background:#fff;"></div>
<div class="a" style="left:472.6px;top:420.95px;width:32px;height:6px;background:#d6d6d6;filter:blur(2px);border-radius:2px"></div>
<div class="t" style="left:427.90px;width:300px;text-align:center;top:420.45px;transform-origin:50% 50%;font-size:7.0px;color:#2c2c2c;transform:scaleX(0.91);">01.01.2024</div>
<div class="t" style="left:494.30px;width:300px;text-align:center;top:420.45px;transform-origin:50% 50%;font-size:7.0px;color:#2c2c2c;transform:scaleX(0.91);">31.03.2024</div>
<div class="a" style="left:705.00px;top:423.00px;width:5.00px;height:1.10px;background:#1a1a1a;"></div>
<div class="t" style="left:471.00px;width:300px;text-align:right;top:420.45px;transform-origin:100% 50%;font-size:7.0px;color:#2c2c2c;transform:scaleX(0.94);">382 134</div>
<div class="a" style="left:800.80px;top:423.00px;width:5.00px;height:1.10px;background:#1a1a1a;"></div>
<div class="t" style="left:589.00px;width:300px;text-align:right;top:420.45px;transform-origin:100% 50%;font-size:7.0px;color:#2c2c2c;transform:scaleX(0.92);">21 190 849.05 ₽</div>
<div class="a" style="left:893.90px;top:419.45px;width:54.6px;height:9.6px;border-radius:5px;background:#efefef"></div>
<div class="a" style="left:893.90px;top:419.25px;width:12.6px;height:9.9px;border-radius:5px;background:#f8434b"></div>
<div class="t" style="left:750.20px;width:300px;text-align:center;top:422.54px;transform-origin:50% 50%;font-size:4.8px;color:#fff;transform:scaleX(1);font-weight:bold;">0 %</div>
<div class="a" style="left:190.80px;top:447.05px;width:760.20px;height:1.00px;background:#efefef;"></div>
<div class="t" style="left:193.80px;top:436.30px;transform-origin:0 50%;font-size:7.0px;color:#2c2c2c;transform:scaleX(0.91);">prof. c N301 (c KP105/, K203/, KP206/, MAXI/)</div>
<div class="t" style="left:444.40px;top:436.30px;transform-origin:0 50%;font-size:7.0px;color:#2c2c2c;transform:scaleX(0.91);">ООО "М</div>
<div class="a" style="left:464.60px;top:432.20px;width:51.40px;height:15.85px;background:#fff;"></div>
<div class="a" style="left:466.6px;top:436.80px;width:46px;height:6px;background:#d6d6d6;filter:blur(2px);border-radius:2px"></div>
<div class="t" style="left:427.90px;width:300px;text-align:center;top:436.30px;transform-origin:50% 50%;font-size:7.0px;color:#2c2c2c;transform:scaleX(0.91);">01.01.2024</div>
<div class="t" style="left:494.30px;width:300px;text-align:center;top:436.30px;transform-origin:50% 50%;font-size:7.0px;color:#2c2c2c;transform:scaleX(0.91);">31.03.2024</div>
<div class="a" style="left:705.00px;top:439.00px;width:5.00px;height:1.10px;background:#1a1a1a;"></div>
<div class="t" style="left:471.00px;width:300px;text-align:right;top:436.30px;transform-origin:100% 50%;font-size:7.0px;color:#2c2c2c;transform:scaleX(0.94);">341 822</div>
<div class="a" style="left:800.80px;top:439.00px;width:5.00px;height:1.10px;background:#1a1a1a;"></div>
<div class="t" style="left:589.00px;width:300px;text-align:right;top:436.30px;transform-origin:100% 50%;font-size:7.0px;color:#2c2c2c;transform:scaleX(0.92);">14 287 428.11 ₽</div>
<div class="a" style="left:893.90px;top:435.30px;width:54.6px;height:9.6px;border-radius:5px;background:#efefef"></div>
<div class="a" style="left:893.90px;top:435.10px;width:12.6px;height:9.9px;border-radius:5px;background:#f8434b"></div>
<div class="t" style="left:750.20px;width:300px;text-align:center;top:438.39px;transform-origin:50% 50%;font-size:4.8px;color:#fff;transform:scaleX(1);font-weight:bold;">0 %</div>
<div class="a" style="left:191.30px;top:447.85px;width:759.20px;height:15.45px;background:#eff0f2;"></div>
<div class="a" style="left:464.60px;top:448.05px;width:51.40px;height:15.85px;background:#f7f7f8;"></div>
<div class="t" style="left:420.90px;width:300px;text-align:center;top:451.74px;transform-origin:50% 50%;font-size:7.2px;font-weight:bold;color:#222;transform:scaleX(0.9);">с октябрь 2023 по декабрь 2023</div>
<div class="a" style="left:190.80px;top:478.75px;width:760.20px;height:1.00px;background:#efefef;"></div>
<div class="t" style="left:193.80px;top:468.00px;transform-origin:0 50%;font-size:7.0px;color:#2c2c2c;transform:scaleX(0.91);">prof. c N301 (c KP105/, K203/, KP206/, MAXI/)</div>
<div class="t" style="left:444.40px;top:468.00px;transform-origin:0 50%;font-size:7.0px;color:#2c2c2c;transform:scaleX(0.91);">ООО "М</div>
<div class="a" style="left:464.60px;top:463.90px;width:51.40px;height:15.85px;background:#fff;"></div>
<div class="a" style="left:466.6px;top:468.50px;width:46px;height:6px;background:#d6d6d6;filter:blur(2px);border-radius:2px"></div>
<div class="t" style="left:427.90px;width:300px;text-align:center;top:468.00px;transform-origin:50% 50%;font-size:7.0px;color:#2c2c2c;transform:scaleX(0.91);">01.10.2023</div>
<div class="t" style="left:494.30px;width:300px;text-align:center;top:468.00px;transform-origin:50% 50%;font-size:7.0px;color:#2c2c2c;transform:scaleX(0.91);">31.12.2023</div>
<div class="a" style="left:705.00px;top:471.00px;width:5.00px;height:1.10px;background:#1a1a1a;"></div>
<div class="t" style="left:471.00px;width:300px;text-align:right;top:468.00px;transform-origin:100% 50%;font-size:7.0px;color:#2c2c2c;transform:scaleX(0.94);">109 972</div>
<div class="a" style="left:800.80px;top:471.00px;width:5.00px;height:1.10px;background:#1a1a1a;"></div>
<div class="t" style="left:589.00px;width:300px;text-align:right;top:468.00px;transform-origin:100% 50%;font-size:7.0px;color:#2c2c2c;transform:scaleX(0.92);">4 635 836.43 ₽</div>
<div class="a" style="left:893.90px;top:467.00px;width:54.6px;height:9.6px;border-radius:5px;background:#efefef"></div>
<div class="a" style="left:893.90px;top:466.80px;width:12.6px;height:9.9px;border-radius:5px;background:#f8434b"></div>
<div class="t" style="left:750.20px;width:300px;text-align:center;top:470.09px;transform-origin:50% 50%;font-size:4.8px;color:#fff;transform:scaleX(1);font-weight:bold;">0 %</div>
<div class="a" style="left:190.80px;top:494.60px;width:760.20px;height:1.00px;background:#efefef;"></div>
<div class="t" style="left:193.80px;top:483.85px;transform-origin:0 50%;font-size:7.0px;color:#2c2c2c;transform:scaleX(0.91);">prof. c N301 (c KP105/, K203/, KP206/, MAXI/)</div>
<div class="t" style="left:454.40px;top:483.85px;transform-origin:0 50%;font-size:7.0px;color:#2c2c2c;transform:scaleX(0.91);">ООО</div>
<div class="a" style="left:464.60px;top:479.75px;width:51.40px;height:15.85px;background:#fff;"></div>
<div class="a" style="left:472.6px;top:484.35px;width:32px;height:6px;background:#d6d6d6;filter:blur(2px);border-radius:2px"></div>
<div class="t" style="left:427.90px;width:300px;text-align:center;top:483.85px;transform-origin:50% 50%;font-size:7.0px;color:#2c2c2c;transform:scaleX(0.91);">01.10.2023</div>
<div class="t" style="left:494.30px;width:300px;text-align:center;top:483.85px;transform-origin:50% 50%;font-size:7.0px;color:#2c2c2c;transform:scaleX(0.91);">31.12.2023</div>
<div class="a" style="left:705.00px;top:487.00px;width:5.00px;height:1.10px;background:#1a1a1a;"></div>
<div class="t" style="left:471.00px;width:300px;text-align:right;top:483.85px;transform-origin:100% 50%;font-size:7.0px;color:#2c2c2c;transform:scaleX(0.94);">413 648</div>
<div class="a" style="left:800.80px;top:487.00px;width:5.00px;height:1.10px;background:#1a1a1a;"></div>
<div class="t" style="left:589.00px;width:300px;text-align:right;top:483.85px;transform-origin:100% 50%;font-size:7.0px;color:#2c2c2c;transform:scaleX(0.92);">25 151 564.21 ₽</div>
<div class="a" style="left:893.90px;top:482.85px;width:54.6px;height:9.6px;border-radius:5px;background:#efefef"></div>
<div class="a" style="left:893.90px;top:482.65px;width:12.6px;height:9.9px;border-radius:5px;background:#f8434b"></div>
<div class="t" style="left:750.20px;width:300px;text-align:center;top:485.94px;transform-origin:50% 50%;font-size:4.8px;color:#fff;transform:scaleX(1);font-weight:bold;">0 %</div>
<div class="a" style="left:190.80px;top:510.45px;width:760.20px;height:1.00px;background:#efefef;"></div>
<div class="t" style="left:193.80px;top:499.70px;transform-origin:0 50%;font-size:7.0px;color:#2c2c2c;transform:scaleX(0.91);">prof. c N301 (c KP105/, K203/, KP206/, MAXI/)</div>
<div class="t" style="left:444.40px;top:499.70px;transform-origin:0 50%;font-size:7.0px;color:#2c2c2c;transform:scaleX(0.91);">ООО "М</div>
<div class="a" style="left:464.60px;top:495.60px;width:51.40px;height:15.85px;background:#fff;"></div>
<div class="a" style="left:466.6px;top:500.20px;width:46px;height:6px;background:#d6d6d6;filter:blur(2px);border-radius:2px"></div>
<div class="t" style="left:427.90px;width:300px;text-align:center;top:499.70px;transform-origin:50% 50%;font-size:7.0px;color:#2c2c2c;transform:scaleX(0.91);">01.10.2023</div>
<div class="t" style="left:494.30px;width:300px;text-align:center;top:499.70px;transform-origin:50% 50%;font-size:7.0px;color:#2c2c2c;transform:scaleX(0.91);">31.12.2023</div>
<div class="a" style="left:705.00px;top:502.00px;width:5.00px;height:1.10px;background:#1a1a1a;"></div>
<div class="t" style="left:471.00px;width:300px;text-align:right;top:499.70px;transform-origin:100% 50%;font-size:7.0px;color:#2c2c2c;transform:scaleX(0.94);">414 812</div>
<div class="a" style="left:800.80px;top:502.00px;width:5.00px;height:1.10px;background:#1a1a1a;"></div>
<div class="t" style="left:589.00px;width:300px;text-align:right;top:499.70px;transform-origin:100% 50%;font-size:7.0px;color:#2c2c2c;transform:scaleX(0.92);">18 131 942.72 ₽</div>
<div class="a" style="left:893.90px;top:498.70px;width:54.6px;height:9.6px;border-radius:5px;background:#efefef"></div>
<div class="a" style="left:893.90px;top:498.50px;width:12.6px;height:9.9px;border-radius:5px;background:#f8434b"></div>
<div class="t" style="left:750.20px;width:300px;text-align:center;top:501.79px;transform-origin:50% 50%;font-size:4.8px;color:#fff;transform:scaleX(1);font-weight:bold;">0 %</div>
<div class="a" style="left:191.30px;top:511.25px;width:759.20px;height:15.45px;background:#eff0f2;"></div>
<div class="a" style="left:464.60px;top:511.45px;width:51.40px;height:15.85px;background:#f7f7f8;"></div>
<div class="t" style="left:420.90px;width:300px;text-align:center;top:515.14px;transform-origin:50% 50%;font-size:7.2px;font-weight:bold;color:#222;transform:scaleX(0.9);">с июль 2023 по сентябрь 2023</div>
<div class="a" style="left:190.80px;top:542.15px;width:760.20px;height:1.00px;background:#efefef;"></div>
<div class="t" style="left:193.80px;top:531.40px;transform-origin:0 50%;font-size:7.0px;color:#2c2c2c;transform:scaleX(0.91);">prof. c N301 (c KP105/, K203/, KP206/, MAXI/)</div>
<div class="t" style="left:444.40px;top:531.40px;transform-origin:0 50%;font-size:7.0px;color:#2c2c2c;transform:scaleX(0.91);">ООО "М</div>
<div class="a" style="left:464.60px;top:527.30px;width:51.40px;height:15.85px;background:#fff;"></div>
<div class="a" style="left:466.6px;top:531.90px;width:46px;height:6px;background:#d6d6d6;filter:blur(2px);border-radius:2px"></div>
<div class="t" style="left:427.90px;width:300px;text-align:center;top:531.40px;transform-origin:50% 50%;font-size:7.0px;color:#2c2c2c;transform:scaleX(0.91);">01.07.2023</div>
<div class="t" style="left:494.30px;width:300px;text-align:center;top:531.40px;transform-origin:50% 50%;font-size:7.0px;color:#2c2c2c;transform:scaleX(0.91);">30.09.2023</div>
<div class="a" style="left:705.00px;top:534.00px;width:5.00px;height:1.10px;background:#1a1a1a;"></div>
<div class="t" style="left:471.00px;width:300px;text-align:right;top:531.40px;transform-origin:100% 50%;font-size:7.0px;color:#2c2c2c;transform:scaleX(0.94);">108 432</div>
<div class="a" style="left:800.80px;top:534.00px;width:5.00px;height:1.10px;background:#1a1a1a;"></div>
<div class="t" style="left:589.00px;width:300px;text-align:right;top:531.40px;transform-origin:100% 50%;font-size:7.0px;color:#2c2c2c;transform:scaleX(0.92);">4 482 820.65 ₽</div>
<div class="a" style="left:893.90px;top:530.40px;width:54.6px;height:9.6px;border-radius:5px;background:#efefef"></div>
<div class="a" style="left:893.90px;top:530.20px;width:12.6px;height:9.9px;border-radius:5px;background:#f8434b"></div>
<div class="t" style="left:750.20px;width:300px;text-align:center;top:533.49px;transform-origin:50% 50%;font-size:4.8px;color:#fff;transform:scaleX(1);font-weight:bold;">0 %</div>
<div class="a" style="left:190.80px;top:558.00px;width:760.20px;height:1.00px;background:#efefef;"></div>
<div class="t" style="left:193.80px;top:547.25px;transform-origin:0 50%;font-size:7.0px;color:#2c2c2c;transform:scaleX(0.91);">prof. c N301 (c KP105/, K203/, KP206/, MAXI/)</div>
<div class="t" style="left:454.40px;top:547.25px;transform-origin:0 50%;font-size:7.0px;color:#2c2c2c;transform:scaleX(0.91);">ООО</div>
<div class="a" style="left:464.60px;top:543.15px;width:51.40px;height:15.85px;background:#fff;"></div>
<div class="a" style="left:472.6px;top:547.75px;width:32px;height:6px;background:#d6d6d6;filter:blur(2px);border-radius:2px"></div>
<div class="t" style="left:427.90px;width:300px;text-align:center;top:547.25px;transform-origin:50% 50%;font-size:7.0px;color:#2c2c2c;transform:scaleX(0.91);">01.07.2023</div>
<div class="t" style="left:494.30px;width:300px;text-align:center;top:547.25px;transform-origin:50% 50%;font-size:7.0px;color:#2c2c2c;transform:scaleX(0.91);">30.09.2023</div>
<div class="a" style="left:705.00px;top:550.00px;width:5.00px;height:1.10px;background:#1a1a1a;"></div>
<div class="t" style="left:471.00px;width:300px;text-align:right;top:547.25px;transform-origin:100% 50%;font-size:7.0px;color:#2c2c2c;transform:scaleX(0.94);">426 756</div>
<div class="a" style="left:800.80px;top:550.00px;width:5.00px;height:1.10px;background:#1a1a1a;"></div>
<div class="t" style="left:589.00px;width:300px;text-align:right;top:547.25px;transform-origin:100% 50%;font-size:7.0px;color:#2c2c2c;transform:scaleX(0.92);">25 741 402.05 ₽</div>
<div class="a" style="left:893.90px;top:546.25px;width:54.6px;height:9.6px;border-radius:5px;background:#efefef"></div>
<div class="a" style="left:893.90px;top:546.05px;width:12.6px;height:9.9px;border-radius:5px;background:#f8434b"></div>
<div class="t" style="left:750.20px;width:300px;text-align:center;top:549.34px;transform-origin:50% 50%;font-size:4.8px;color:#fff;transform:scaleX(1);font-weight:bold;">0 %</div>
<div class="a" style="left:190.80px;top:573.85px;width:760.20px;height:1.00px;background:#efefef;"></div>
<div class="t" style="left:193.80px;top:563.10px;transform-origin:0 50%;font-size:7.0px;color:#2c2c2c;transform:scaleX(0.91);">prof. c N301 (c KP105/, K203/, KP206/, MAXI/)</div>
<div class="t" style="left:444.40px;top:563.10px;transform-origin:0 50%;font-size:7.0px;color:#2c2c2c;transform:scaleX(0.91);">ООО "М</div>
<div class="a" style="left:464.60px;top:559.00px;width:51.40px;height:15.85px;background:#fff;"></div>
<div class="a" style="left:466.6px;top:563.60px;width:46px;height:6px;background:#d6d6d6;filter:blur(2px);border-radius:2px"></div>
<div class="t" style="left:427.90px;width:300px;text-align:center;top:563.10px;transform-origin:50% 50%;font-size:7.0px;color:#2c2c2c;transform:scaleX(0.91);">01.07.2023</div>
<div class="t" style="left:494.30px;width:300px;text-align:center;top:563.10px;transform-origin:50% 50%;font-size:7.0px;color:#2c2c2c;transform:scaleX(0.91);">30.09.2023</div>
<div class="a" style="left:705.00px;top:566.00px;width:5.00px;height:1.10px;background:#1a1a1a;"></div>
<div class="t" style="left:471.00px;width:300px;text-align:right;top:563.10px;transform-origin:100% 50%;font-size:7.0px;color:#2c2c2c;transform:scaleX(0.94);">465 122</div>
<div class="a" style="left:800.80px;top:566.00px;width:5.00px;height:1.10px;background:#1a1a1a;"></div>
<div class="t" style="left:589.00px;width:300px;text-align:right;top:563.10px;transform-origin:100% 50%;font-size:7.0px;color:#2c2c2c;transform:scaleX(0.92);">19 560 199.03 ₽</div>
<div class="a" style="left:893.90px;top:562.10px;width:54.6px;height:9.6px;border-radius:5px;background:#efefef"></div>
<div class="a" style="left:893.90px;top:561.90px;width:12.6px;height:9.9px;border-radius:5px;background:#f8434b"></div>
<div class="t" style="left:750.20px;width:300px;text-align:center;top:565.19px;transform-origin:50% 50%;font-size:4.8px;color:#fff;transform:scaleX(1);font-weight:bold;">0 %</div>
<div class="a" style="left:191.30px;top:574.65px;width:759.20px;height:15.45px;background:#eff0f2;"></div>
<div class="a" style="left:464.60px;top:574.85px;width:51.40px;height:15.85px;background:#f7f7f8;"></div>
<div class="t" style="left:420.90px;width:300px;text-align:center;top:578.54px;transform-origin:50% 50%;font-size:7.2px;font-weight:bold;color:#222;transform:scaleX(0.9);">с апрель 2023 по июнь 2023</div>
<div class="a" style="left:190.80px;top:605.55px;width:760.20px;height:1.00px;background:#efefef;"></div>
<div class="t" style="left:193.80px;top:594.80px;transform-origin:0 50%;font-size:7.0px;color:#2c2c2c;transform:scaleX(0.91);">prof. c N301 (c KP105/, K203/, KP206/, MAXI/)</div>
<div class="t" style="left:444.40px;top:594.80px;transform-origin:0 50%;font-size:7.0px;color:#2c2c2c;transform:scaleX(0.91);">ООО "М</div>
<div class="a" style="left:464.60px;top:590.70px;width:51.40px;height:15.85px;background:#fff;"></div>
<div class="a" style="left:466.6px;top:595.30px;width:46px;height:6px;background:#d6d6d6;filter:blur(2px);border-radius:2px"></div>
<div class="t" style="left:427.90px;width:300px;text-align:center;top:594.80px;transform-origin:50% 50%;font-size:7.0px;color:#2c2c2c;transform:scaleX(0.91);">01.04.2023</div>
<div class="t" style="left:494.30px;width:300px;text-align:center;top:594.80px;transform-origin:50% 50%;font-size:7.0px;color:#2c2c2c;transform:scaleX(0.91);">30.06.2023</div>
<div class="a" style="left:705.00px;top:598.00px;width:5.00px;height:1.10px;background:#1a1a1a;"></div>
<div class="t" style="left:471.00px;width:300px;text-align:right;top:594.80px;transform-origin:100% 50%;font-size:7.0px;color:#2c2c2c;transform:scaleX(0.94);">427 126</div>
<div class="a" style="left:800.80px;top:598.00px;width:5.00px;height:1.10px;background:#1a1a1a;"></div>
<div class="t" style="left:589.00px;width:300px;text-align:right;top:594.80px;transform-origin:100% 50%;font-size:7.0px;color:#2c2c2c;transform:scaleX(0.92);">20 768 372.65 ₽</div>
<div class="a" style="left:893.90px;top:593.80px;width:54.6px;height:9.6px;border-radius:5px;background:#efefef"></div>
<div class="a" style="left:893.90px;top:593.60px;width:12.6px;height:9.9px;border-radius:5px;background:#f8434b"></div>
<div class="t" style="left:750.20px;width:300px;text-align:center;top:596.89px;transform-origin:50% 50%;font-size:4.8px;color:#fff;transform:scaleX(1);font-weight:bold;">0 %</div>
<div class="a" style="left:190.80px;top:621.40px;width:760.20px;height:1.00px;background:#efefef;"></div>
<div class="t" style="left:193.80px;top:610.65px;transform-origin:0 50%;font-size:7.0px;color:#2c2c2c;transform:scaleX(0.91);">prof. c N301 (c KP105/, K203/, KP206/, MAXI/)</div>
<div class="t" style="left:454.40px;top:610.65px;transform-origin:0 50%;font-size:7.0px;color:#2c2c2c;transform:scaleX(0.91);">ООО</div>
<div class="a" style="left:464.60px;top:606.55px;width:51.40px;height:15.85px;background:#fff;"></div>
<div class="a" style="left:472.6px;top:611.15px;width:32px;height:6px;background:#d6d6d6;filter:blur(2px);border-radius:2px"></div>
<div class="t" style="left:427.90px;width:300px;text-align:center;top:610.65px;transform-origin:50% 50%;font-size:7.0px;color:#2c2c2c;transform:scaleX(0.91);">01.04.2023</div>
<div class="t" style="left:494.30px;width:300px;text-align:center;top:610.65px;transform-origin:50% 50%;font-size:7.0px;color:#2c2c2c;transform:scaleX(0.91);">30.06.2023</div>
<div class="a" style="left:705.00px;top:613.00px;width:5.00px;height:1.10px;background:#1a1a1a;"></div>
<div class="t" style="left:471.00px;width:300px;text-align:right;top:610.65px;transform-origin:100% 50%;font-size:7.0px;color:#2c2c2c;transform:scaleX(0.94);">472 598</div>
<div class="a" style="left:800.80px;top:613.00px;width:5.00px;height:1.10px;background:#1a1a1a;"></div>
<div class="t" style="left:589.00px;width:300px;text-align:right;top:610.65px;transform-origin:100% 50%;font-size:7.0px;color:#2c2c2c;transform:scaleX(0.92);">27 965 025.23 ₽</div>
<div class="a" style="left:893.90px;top:609.65px;width:54.6px;height:9.6px;border-radius:5px;background:#efefef"></div>
<div class="a" style="left:893.90px;top:609.45px;width:12.6px;height:9.9px;border-radius:5px;background:#f8434b"></div>
<div class="t" style="left:750.20px;width:300px;text-align:center;top:612.74px;transform-origin:50% 50%;font-size:4.8px;color:#fff;transform:scaleX(1);font-weight:bold;">0 %</div>
<div class="a" style="left:190.80px;top:637.25px;width:760.20px;height:1.00px;background:#efefef;"></div>
<div class="t" style="left:193.80px;top:626.50px;transform-origin:0 50%;font-size:7.0px;color:#2c2c2c;transform:scaleX(0.91);">prof. c N301 (c KP105/, K203/, KP206/, MAXI/)</div>
<div class="t" style="left:444.40px;top:626.50px;transform-origin:0 50%;font-size:7.0px;color:#2c2c2c;transform:scaleX(0.91);">ООО "М</div>
<div class="a" style="left:464.60px;top:622.40px;width:51.40px;height:15.85px;background:#fff;"></div>
<div class="a" style="left:466.6px;top:627.00px;width:46px;height:6px;background:#d6d6d6;filter:blur(2px);border-radius:2px"></div>
<div class="t" style="left:427.90px;width:300px;text-align:center;top:626.50px;transform-origin:50% 50%;font-size:7.0px;color:#2c2c2c;transform:scaleX(0.91);">01.04.2023</div>
<div class="t" style="left:494.30px;width:300px;text-align:center;top:626.50px;transform-origin:50% 50%;font-size:7.0px;color:#2c2c2c;transform:scaleX(0.91);">30.06.2023</div>
<div class="a" style="left:705.00px;top:629.00px;width:5.00px;height:1.10px;background:#1a1a1a;"></div>
<div class="t" style="left:471.00px;width:300px;text-align:right;top:626.50px;transform-origin:100% 50%;font-size:7.0px;color:#2c2c2c;transform:scaleX(0.94);">99 045</div>
<div class="a" style="left:800.80px;top:629.00px;width:5.00px;height:1.10px;background:#1a1a1a;"></div>
<div class="t" style="left:589.00px;width:300px;text-align:right;top:626.50px;transform-origin:100% 50%;font-size:7.0px;color:#2c2c2c;transform:scaleX(0.92);">4 364 544.45 ₽</div>
<div class="a" style="left:893.90px;top:625.50px;width:54.6px;height:9.6px;border-radius:5px;background:#efefef"></div>
<div class="a" style="left:893.90px;top:625.30px;width:12.6px;height:9.9px;border-radius:5px;background:#f8434b"></div>
<div class="t" style="left:750.20px;width:300px;text-align:center;top:628.59px;transform-origin:50% 50%;font-size:4.8px;color:#fff;transform:scaleX(1);font-weight:bold;">0 %</div>
<div class="a" style="left:191.30px;top:638.05px;width:759.20px;height:15.45px;background:#eff0f2;"></div>
<div class="a" style="left:464.60px;top:638.25px;width:51.40px;height:15.85px;background:#f7f7f8;"></div>
<div class="t" style="left:420.90px;width:300px;text-align:center;top:641.94px;transform-origin:50% 50%;font-size:7.2px;font-weight:bold;color:#222;transform:scaleX(0.9);">с январь 2023 по декабрь 2023</div>
<div class="a" style="left:190.80px;top:668.95px;width:760.20px;height:1.00px;background:#efefef;"></div>
<div class="t" style="left:193.80px;top:658.20px;transform-origin:0 50%;font-size:7.0px;color:#2c2c2c;transform:scaleX(0.91);">prof. c N301 (c KP105/, K203/, KP206/, MAXI/)</div>
<div class="t" style="left:454.40px;top:658.20px;transform-origin:0 50%;font-size:7.0px;color:#2c2c2c;transform:scaleX(0.91);">ООО</div>
<div class="a" style="left:464.60px;top:654.10px;width:51.40px;height:15.85px;background:#fff;"></div>
<div class="a" style="left:472.6px;top:658.70px;width:32px;height:6px;background:#d6d6d6;filter:blur(2px);border-radius:2px"></div>
<div class="t" style="left:427.90px;width:300px;text-align:center;top:658.20px;transform-origin:50% 50%;font-size:7.0px;color:#2c2c2c;transform:scaleX(0.91);">01.01.2023</div>
<div class="t" style="left:494.30px;width:300px;text-align:center;top:658.20px;transform-origin:50% 50%;font-size:7.0px;color:#2c2c2c;transform:scaleX(0.91);">31.12.2023</div>
<div class="a" style="left:705.00px;top:661.00px;width:5.00px;height:1.10px;background:#1a1a1a;"></div>
<div class="t" style="left:471.00px;width:300px;text-align:right;top:658.20px;transform-origin:100% 50%;font-size:7.0px;color:#2c2c2c;transform:scaleX(0.94);">1 679 520</div>
<div class="a" style="left:800.80px;top:661.00px;width:5.00px;height:1.10px;background:#1a1a1a;"></div>
<div class="t" style="left:589.00px;width:300px;text-align:right;top:658.20px;transform-origin:100% 50%;font-size:7.0px;color:#2c2c2c;transform:scaleX(0.92);">99 773 198.93 ₽</div>
<div class="a" style="left:893.90px;top:657.20px;width:54.6px;height:9.6px;border-radius:5px;background:#efefef"></div>
<div class="a" style="left:893.90px;top:657.00px;width:12.6px;height:9.9px;border-radius:5px;background:#f8434b"></div>
<div class="t" style="left:750.20px;width:300px;text-align:center;top:660.29px;transform-origin:50% 50%;font-size:4.8px;color:#fff;transform:scaleX(1);font-weight:bold;">0 %</div>
<div class="a" style="left:190.80px;top:684.80px;width:760.20px;height:1.00px;background:#efefef;"></div>
<div class="t" style="left:193.80px;top:674.05px;transform-origin:0 50%;font-size:7.0px;color:#2c2c2c;transform:scaleX(0.91);">prof. c N301 (c KP105/, K203/, KP206/, MAXI/)</div>
<div class="t" style="left:444.40px;top:674.05px;transform-origin:0 50%;font-size:7.0px;color:#2c2c2c;transform:scaleX(0.91);">ООО "М</div>
<div class="a" style="left:464.60px;top:669.95px;width:51.40px;height:15.85px;background:#fff;"></div>
<div class="a" style="left:466.6px;top:674.55px;width:46px;height:6px;background:#d6d6d6;filter:blur(2px);border-radius:2px"></div>
<div class="t" style="left:427.90px;width:300px;text-align:center;top:674.05px;transform-origin:50% 50%;font-size:7.0px;color:#2c2c2c;transform:scaleX(0.91);">01.01.2023</div>
<div class="t" style="left:494.30px;width:300px;text-align:center;top:674.05px;transform-origin:50% 50%;font-size:7.0px;color:#2c2c2c;transform:scaleX(0.91);">31.12.2023</div>
<div class="a" style="left:705.00px;top:677.00px;width:5.00px;height:1.10px;background:#1a1a1a;"></div>
<div class="t" style="left:471.00px;width:300px;text-align:right;top:674.05px;transform-origin:100% 50%;font-size:7.0px;color:#2c2c2c;transform:scaleX(0.94);">404 817</div>
<div class="a" style="left:800.80px;top:677.00px;width:5.00px;height:1.10px;background:#1a1a1a;"></div>
<div class="t" style="left:589.00px;width:300px;text-align:right;top:674.05px;transform-origin:100% 50%;font-size:7.0px;color:#2c2c2c;transform:scaleX(0.92);">17 335 600.35 ₽</div>
<div class="a" style="left:893.90px;top:673.05px;width:54.6px;height:9.6px;border-radius:5px;background:#efefef"></div>
<div class="a" style="left:893.90px;top:672.85px;width:12.6px;height:9.9px;border-radius:5px;background:#f8434b"></div>
<div class="t" style="left:750.20px;width:300px;text-align:center;top:676.14px;transform-origin:50% 50%;font-size:4.8px;color:#fff;transform:scaleX(1);font-weight:bold;">0 %</div>
<div class="a" style="left:191.30px;top:685.60px;width:759.20px;height:15.45px;background:#eff0f2;"></div>
<div class="a" style="left:464.60px;top:685.80px;width:51.40px;height:15.85px;background:#f7f7f8;"></div>
<div class="t" style="left:420.90px;width:300px;text-align:center;top:689.49px;transform-origin:50% 50%;font-size:7.2px;font-weight:bold;color:#222;transform:scaleX(0.9);">с январь 2023 по март 2023</div>
<div class="a" style="left:190.80px;top:716.50px;width:760.20px;height:1.00px;background:#efefef;"></div>
<div class="t" style="left:193.80px;top:705.75px;transform-origin:0 50%;font-size:7.0px;color:#2c2c2c;transform:scaleX(0.91);">prof. c N301 (c KP105/, K203/, KP206/, MAXI/)</div>
<div class="t" style="left:454.40px;top:705.75px;transform-origin:0 50%;font-size:7.0px;color:#2c2c2c;transform:scaleX(0.91);">ООО</div>
<div class="a" style="left:464.60px;top:701.65px;width:51.40px;height:15.85px;background:#fff;"></div>
<div class="a" style="left:472.6px;top:706.25px;width:32px;height:6px;background:#d6d6d6;filter:blur(2px);border-radius:2px"></div>
<div class="t" style="left:427.90px;width:300px;text-align:center;top:705.75px;transform-origin:50% 50%;font-size:7.0px;color:#2c2c2c;transform:scaleX(0.91);">01.01.2023</div>
<div class="t" style="left:494.30px;width:300px;text-align:center;top:705.75px;transform-origin:50% 50%;font-size:7.0px;color:#2c2c2c;transform:scaleX(0.91);">31.03.2023</div>
<div class="a" style="left:705.00px;top:708.00px;width:5.00px;height:1.10px;background:#1a1a1a;"></div>
<div class="t" style="left:471.00px;width:300px;text-align:right;top:705.75px;transform-origin:100% 50%;font-size:7.0px;color:#2c2c2c;transform:scaleX(0.94);">366 518</div>
<div class="a" style="left:800.80px;top:708.00px;width:5.00px;height:1.10px;background:#1a1a1a;"></div>
<div class="t" style="left:589.00px;width:300px;text-align:right;top:705.75px;transform-origin:100% 50%;font-size:7.0px;color:#2c2c2c;transform:scaleX(0.92);">20 915 207.44 ₽</div>
<div class="a" style="left:893.90px;top:704.75px;width:54.6px;height:9.6px;border-radius:5px;background:#efefef"></div>
<div class="a" style="left:893.90px;top:704.55px;width:12.6px;height:9.9px;border-radius:5px;background:#f8434b"></div>
<div class="t" style="left:750.20px;width:300px;text-align:center;top:707.84px;transform-origin:50% 50%;font-size:4.8px;color:#fff;transform:scaleX(1);font-weight:bold;">0 %</div>
<div class="a" style="left:190.80px;top:732.35px;width:760.20px;height:1.00px;background:#efefef;"></div>
<div class="t" style="left:193.80px;top:721.60px;transform-origin:0 50%;font-size:7.0px;color:#2c2c2c;transform:scaleX(0.91);">prof. c N301 (c KP105/, K203/, KP206/, MAXI/)</div>
<div class="t" style="left:444.40px;top:721.60px;transform-origin:0 50%;font-size:7.0px;color:#2c2c2c;transform:scaleX(0.91);">ООО "М</div>
<div class="a" style="left:464.60px;top:717.50px;width:51.40px;height:15.85px;background:#fff;"></div>
<div class="a" style="left:466.6px;top:722.10px;width:46px;height:6px;background:#d6d6d6;filter:blur(2px);border-radius:2px"></div>
<div class="t" style="left:427.90px;width:300px;text-align:center;top:721.60px;transform-origin:50% 50%;font-size:7.0px;color:#2c2c2c;transform:scaleX(0.91);">01.01.2023</div>
<div class="t" style="left:494.30px;width:300px;text-align:center;top:721.60px;transform-origin:50% 50%;font-size:7.0px;color:#2c2c2c;transform:scaleX(0.91);">31.03.2023</div>
<div class="a" style="left:705.00px;top:724.00px;width:5.00px;height:1.10px;background:#1a1a1a;"></div>
<div class="t" style="left:471.00px;width:300px;text-align:right;top:721.60px;transform-origin:100% 50%;font-size:7.0px;color:#2c2c2c;transform:scaleX(0.94);">87 368</div>
<div class="a" style="left:800.80px;top:724.00px;width:5.00px;height:1.10px;background:#1a1a1a;"></div>
<div class="t" style="left:589.00px;width:300px;text-align:right;top:721.60px;transform-origin:100% 50%;font-size:7.0px;color:#2c2c2c;transform:scaleX(0.92);">3 852 398.82 ₽</div>
<div class="a" style="left:893.90px;top:720.60px;width:54.6px;height:9.6px;border-radius:5px;background:#efefef"></div>
<div class="a" style="left:893.90px;top:720.40px;width:12.6px;height:9.9px;border-radius:5px;background:#f8434b"></div>
<div class="t" style="left:750.20px;width:300px;text-align:center;top:723.69px;transform-origin:50% 50%;font-size:4.8px;color:#fff;transform:scaleX(1);font-weight:bold;">0 %</div>
<div class="a" style="left:191.30px;top:733.15px;width:759.20px;height:15.45px;background:#eff0f2;"></div>
<div class="a" style="left:464.60px;top:733.35px;width:51.40px;height:15.85px;background:#f7f7f8;"></div>
<div class="t" style="left:420.90px;width:300px;text-align:center;top:737.04px;transform-origin:50% 50%;font-size:7.2px;font-weight:bold;color:#222;transform:scaleX(0.9);">с январь 2023 по декабрь 2023</div>
<div class="a" style="left:190.80px;top:764.05px;width:760.20px;height:1.00px;background:#efefef;"></div>
<div class="t" style="left:193.80px;top:753.30px;transform-origin:0 50%;font-size:7.0px;color:#2c2c2c;transform:scaleX(0.91);">prof. c N301 (c KP105/, K203/, KP206/, MAXI/)</div>
<div class="t" style="left:444.40px;top:753.30px;transform-origin:0 50%;font-size:7.0px;color:#2c2c2c;transform:scaleX(0.91);">ООО "М</div>
<div class="a" style="left:464.60px;top:749.20px;width:51.40px;height:15.85px;background:#fff;"></div>
<div class="a" style="left:466.6px;top:753.80px;width:46px;height:6px;background:#d6d6d6;filter:blur(2px);border-radius:2px"></div>
<div class="t" style="left:427.90px;width:300px;text-align:center;top:753.30px;transform-origin:50% 50%;font-size:7.0px;color:#2c2c2c;transform:scaleX(0.91);">01.01.2023</div>
<div class="t" style="left:494.30px;width:300px;text-align:center;top:753.30px;transform-origin:50% 50%;font-size:7.0px;color:#2c2c2c;transform:scaleX(0.91);">31.12.2023</div>
<div class="a" style="left:705.00px;top:756.00px;width:5.00px;height:1.10px;background:#1a1a1a;"></div>
<div class="t" style="left:471.00px;width:300px;text-align:right;top:753.30px;transform-origin:100% 50%;font-size:7.0px;color:#2c2c2c;transform:scaleX(0.94);">1 678 386</div>
<div class="a" style="left:800.80px;top:756.00px;width:5.00px;height:1.10px;background:#1a1a1a;"></div>
<div class="t" style="left:589.00px;width:300px;text-align:right;top:753.30px;transform-origin:100% 50%;font-size:7.0px;color:#2c2c2c;transform:scaleX(0.92);">75 741 606.98 ₽</div>
<div class="a" style="left:893.90px;top:752.30px;width:54.6px;height:9.6px;border-radius:5px;background:#efefef"></div>
<div class="a" style="left:893.90px;top:752.10px;width:12.6px;height:9.9px;border-radius:5px;background:#f8434b"></div>
<div class="t" style="left:750.20px;width:300px;text-align:center;top:755.39px;transform-origin:50% 50%;font-size:4.8px;color:#fff;transform:scaleX(1);font-weight:bold;">0 %</div>
<div class="a" style="left:191.30px;top:764.85px;width:759.20px;height:15.45px;background:#eff0f2;"></div>
<div class="a" style="left:464.60px;top:765.05px;width:51.40px;height:15.85px;background:#f7f7f8;"></div>
<div class="t" style="left:420.90px;width:300px;text-align:center;top:768.74px;transform-origin:50% 50%;font-size:7.2px;font-weight:bold;color:#222;transform:scaleX(0.9);">с январь 2023 по март 2023</div>
<div class="a" style="left:190.80px;top:795.75px;width:760.20px;height:1.00px;background:#efefef;"></div>
<div class="t" style="left:193.80px;top:785.00px;transform-origin:0 50%;font-size:7.0px;color:#2c2c2c;transform:scaleX(0.91);">prof. c N301 (c KP105/, K203/, KP206/, MAXI/)</div>
<div class="t" style="left:444.40px;top:785.00px;transform-origin:0 50%;font-size:7.0px;color:#2c2c2c;transform:scaleX(0.91);">ООО "М</div>
<div class="a" style="left:464.60px;top:780.90px;width:51.40px;height:15.85px;background:#fff;"></div>
<div class="a" style="left:466.6px;top:785.50px;width:46px;height:6px;background:#d6d6d6;filter:blur(2px);border-radius:2px"></div>
<div class="t" style="left:427.90px;width:300px;text-align:center;top:785.00px;transform-origin:50% 50%;font-size:7.0px;color:#2c2c2c;transform:scaleX(0.91);">01.01.2023</div>
<div class="t" style="left:494.30px;width:300px;text-align:center;top:785.00px;transform-origin:50% 50%;font-size:7.0px;color:#2c2c2c;transform:scaleX(0.91);">31.03.2023</div>
<div class="a" style="left:705.00px;top:788.00px;width:5.00px;height:1.10px;background:#1a1a1a;"></div>
<div class="t" style="left:471.00px;width:300px;text-align:right;top:785.00px;transform-origin:100% 50%;font-size:7.0px;color:#2c2c2c;transform:scaleX(0.94);">371 326</div>
<div class="a" style="left:800.80px;top:788.00px;width:5.00px;height:1.10px;background:#1a1a1a;"></div>
<div class="t" style="left:589.00px;width:300px;text-align:right;top:785.00px;transform-origin:100% 50%;font-size:7.0px;color:#2c2c2c;transform:scaleX(0.92);">17 281 092.58 ₽</div>
<div class="a" style="left:893.90px;top:784.00px;width:54.6px;height:9.6px;border-radius:5px;background:#efefef"></div>
<div class="a" style="left:893.90px;top:783.80px;width:12.6px;height:9.9px;border-radius:5px;background:#f8434b"></div>
<div class="t" style="left:750.20px;width:300px;text-align:center;top:787.09px;transform-origin:50% 50%;font-size:4.8px;color:#fff;transform:scaleX(1);font-weight:bold;">0 %</div>
<div class="a" style="left:191.30px;top:796.55px;width:759.20px;height:15.45px;background:#eff0f2;"></div>
<div class="a" style="left:464.60px;top:796.75px;width:51.40px;height:15.85px;background:#f7f7f8;"></div>
<div class="t" style="left:420.90px;width:300px;text-align:center;top:800.44px;transform-origin:50% 50%;font-size:7.2px;font-weight:bold;color:#222;transform:scaleX(0.9);">с октябрь 2022 по декабрь 2022</div>
<div class="a" style="left:190.80px;top:827.45px;width:760.20px;height:1.00px;background:#efefef;"></div>
<div class="t" style="left:193.80px;top:816.70px;transform-origin:0 50%;font-size:7.0px;color:#2c2c2c;transform:scaleX(0.91);">prof. c N301 (c KP105/, K203/, KP206/, MAXI/)</div>
<div class="t" style="left:454.40px;top:816.70px;transform-origin:0 50%;font-size:7.0px;color:#2c2c2c;transform:scaleX(0.91);">ООО</div>
<div class="a" style="left:464.60px;top:812.60px;width:51.40px;height:15.85px;background:#fff;"></div>
<div class="a" style="left:472.6px;top:817.20px;width:32px;height:6px;background:#d6d6d6;filter:blur(2px);border-radius:2px"></div>
<div class="t" style="left:427.90px;width:300px;text-align:center;top:816.70px;transform-origin:50% 50%;font-size:7.0px;color:#2c2c2c;transform:scaleX(0.91);">01.10.2022</div>
<div class="t" style="left:494.30px;width:300px;text-align:center;top:816.70px;transform-origin:50% 50%;font-size:7.0px;color:#2c2c2c;transform:scaleX(0.91);">31.12.2022</div>
<div class="a" style="left:705.00px;top:819.00px;width:5.00px;height:1.10px;background:#1a1a1a;"></div>
<div class="t" style="left:471.00px;width:300px;text-align:right;top:816.70px;transform-origin:100% 50%;font-size:7.0px;color:#2c2c2c;transform:scaleX(0.94);">407 580</div>
<div class="a" style="left:800.80px;top:819.00px;width:5.00px;height:1.10px;background:#1a1a1a;"></div>
<div class="t" style="left:589.00px;width:300px;text-align:right;top:816.70px;transform-origin:100% 50%;font-size:7.0px;color:#2c2c2c;transform:scaleX(0.92);">25 488 798.26 ₽</div>
<div class="a" style="left:893.90px;top:815.70px;width:54.6px;height:9.6px;border-radius:5px;background:#efefef"></div>
<div class="a" style="left:893.90px;top:815.50px;width:12.6px;height:9.9px;border-radius:5px;background:#f8434b"></div>
<div class="t" style="left:750.20px;width:300px;text-align:center;top:818.79px;transform-origin:50% 50%;font-size:4.8px;color:#fff;transform:scaleX(1);font-weight:bold;">0 %</div>
</div></div>
</body></html>
